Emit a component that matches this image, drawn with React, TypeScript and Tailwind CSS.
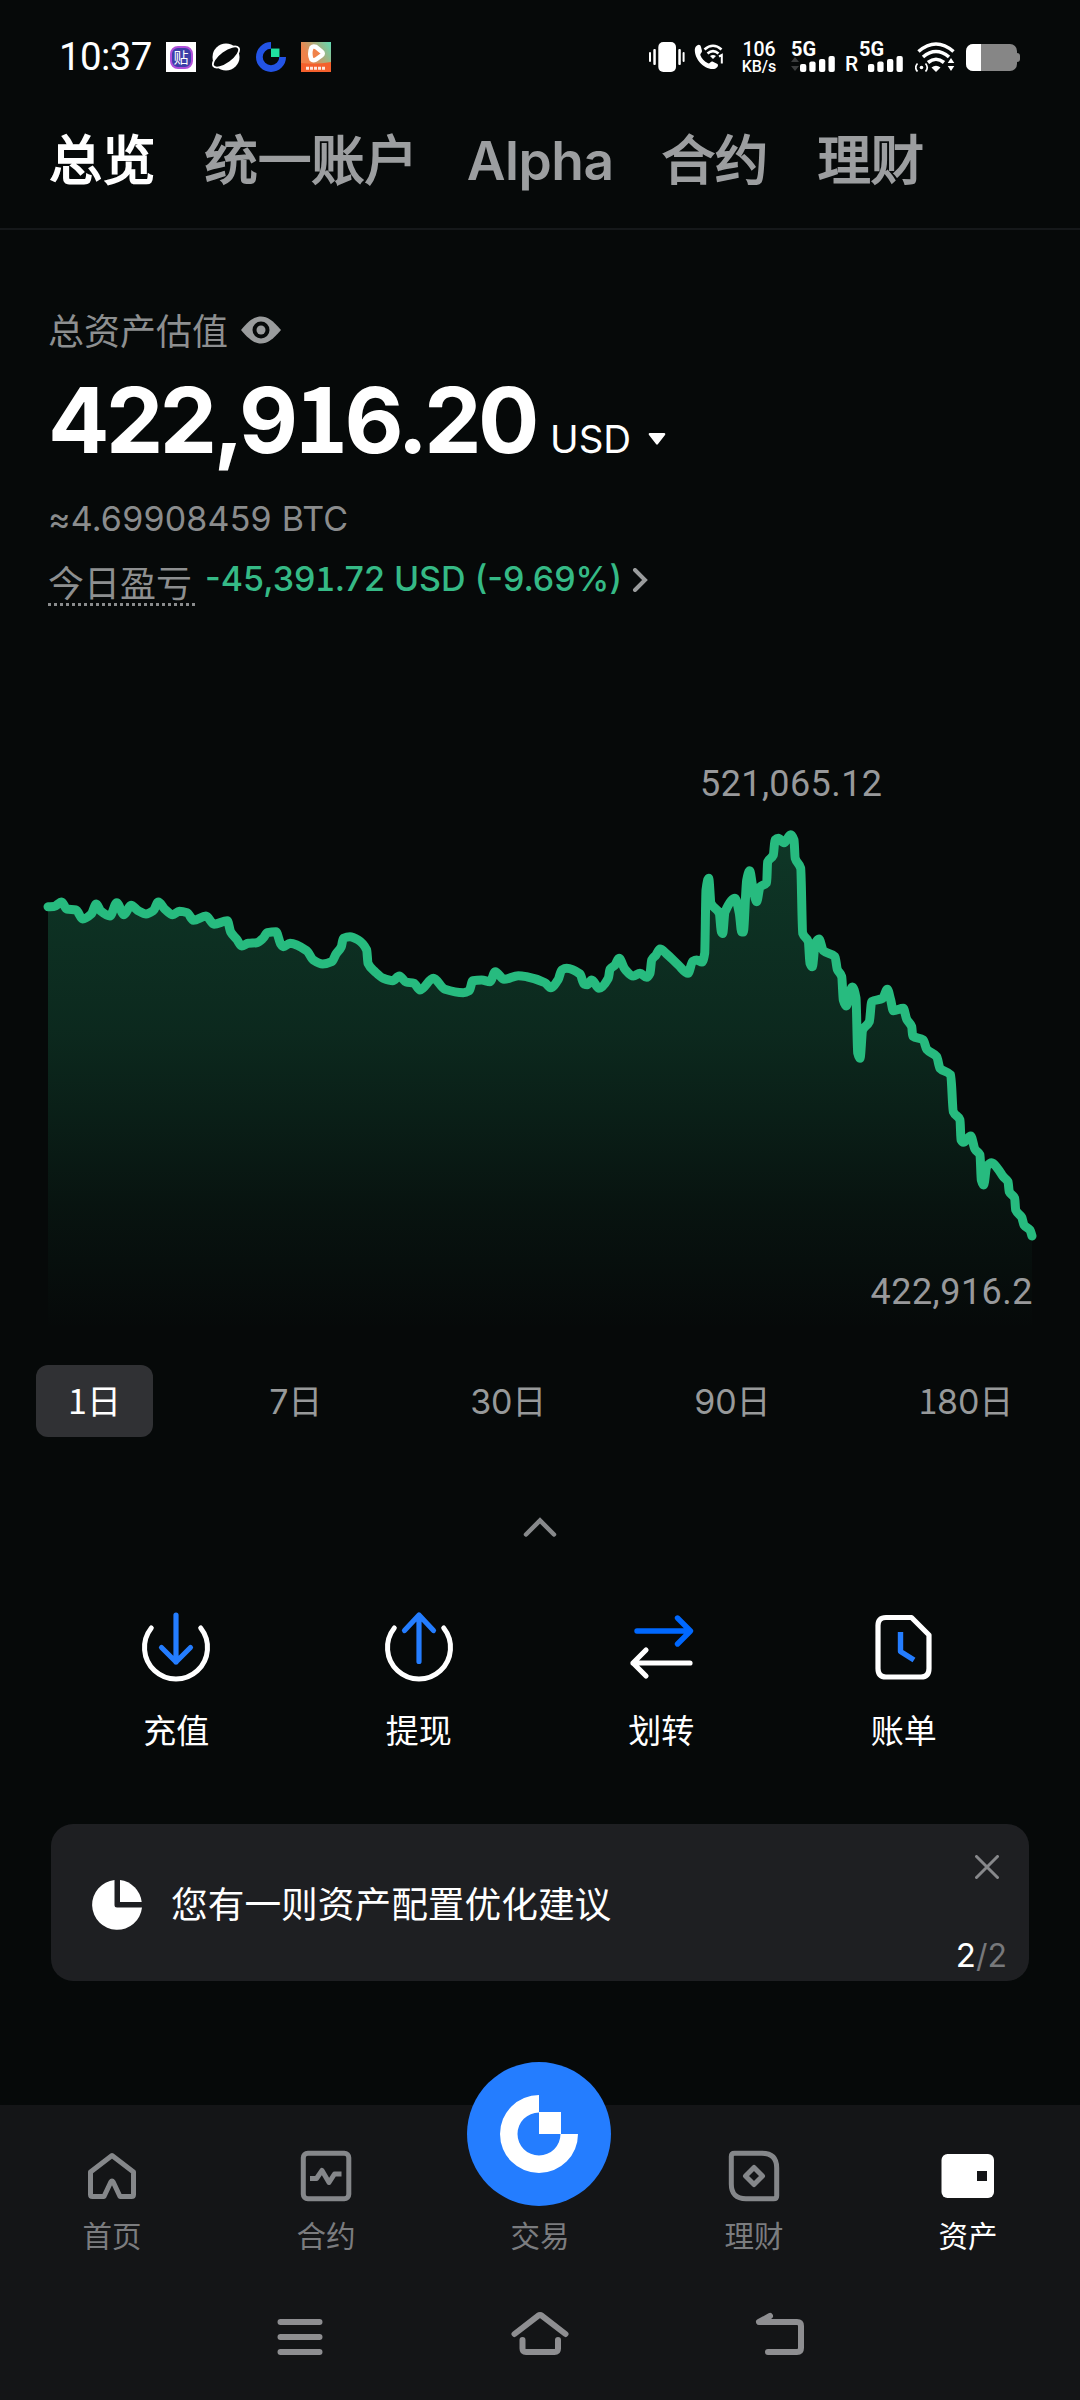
import type { ReactNode } from "react";

type Point = [number, number];

/** Asset value over one day, in chart coordinates. */
const SERIES: Point[] = [
  [48, 906.7], [54, 906.5], [61.7, 902], [66.7, 909], [76, 910], [82.7, 919], [91.3, 914], [96.3, 904], [100.7, 911],
  [110, 916], [116.7, 902.7], [124, 914.7], [131, 905.3], [138.3, 910.7], [146, 914], [153.3, 910.7], [158.3, 902],
  [165, 909.3], [172.7, 914.7], [179.3, 911.3], [187.3, 912.7], [193.3, 920.3], [206, 916], [214, 924.3], [227.3, 920.7],
  [230.7, 932], [236.7, 939.3], [241.7, 946], [248.3, 943.3], [256.7, 942.7], [263.3, 938], [267.3, 932.7], [276, 931.7],
  [280.7, 944], [283.3, 946.7], [290, 943.3], [306.7, 950.7], [313.3, 960], [322.7, 964], [331.7, 961.7], [336, 954],
  [341.3, 946.7], [343.3, 938.3], [350, 936.7], [358.3, 940], [366.7, 950], [368, 963.3], [375, 971.7], [383.3, 978.3],
  [392.7, 980.7], [399.3, 976], [406, 982], [414, 983.3], [420, 990], [433.3, 978.3], [445, 989.3], [463.3, 992.7],
  [469.3, 990.7], [472.7, 980.7], [481.7, 980], [490, 981.7], [495.3, 971.7], [504, 979.3], [518.3, 975.7], [526.7, 976.7],
  [545, 982.7], [550.7, 987.7], [558.3, 979.3], [561.7, 970], [566.7, 968.3], [580, 974], [584, 984], [587.3, 984.7],
  [591.7, 980], [599, 988.3], [608.3, 978.3], [610, 969.3], [615, 965], [619, 958.3], [625, 969.3], [633.3, 976],
  [640, 973.3], [646.7, 977.3], [650, 973.3], [651.7, 960], [656, 955], [660, 949], [666.7, 954], [678.3, 965],
  [688, 973.3], [692.7, 961.3], [696.7, 960], [702, 962], [704.7, 953.3], [706, 890], [708.7, 878.3], [711, 903.3],
  [719.3, 913.3], [721.3, 931.7], [722.7, 933.5], [725, 912], [735, 898.3], [739.3, 913.3], [741.7, 932], [743.3, 932],
  [746.7, 880], [749.7, 870.7], [752.7, 886.7], [756.7, 901.7], [760, 887], [766.7, 882.7], [767.6, 862], [773.3, 855],
  [775, 840], [778.3, 838.3], [784, 842.7], [790.7, 834.7], [794, 840], [795.2, 858.3], [800.7, 868.3], [802.7, 933.3],
  [808.3, 941.7], [810, 963.3], [812.3, 966.7], [815.3, 943.3], [819, 939], [823.3, 950.7], [835, 956.7], [837.3, 969.3],
  [841.7, 976.7], [843.3, 1000], [846.2, 1006], [852.3, 987], [856, 998], [857.7, 1053], [860, 1058.3], [862.7, 1030],
  [869.3, 1021.7], [871.7, 1001.7], [882.7, 998.3], [887.3, 989.3], [890.7, 1000], [893.3, 1010.7], [903.3, 1008.3],
  [906.7, 1019.3], [911.7, 1026.7], [912.7, 1036], [923.3, 1040], [926.7, 1049.3], [936.7, 1056.7], [940, 1068.3],
  [950.7, 1075], [953.3, 1111.7], [960, 1120], [961, 1140], [963.3, 1142.3], [970.7, 1136], [975, 1149.3], [980, 1155],
  [981.3, 1180], [983.7, 1185], [986.7, 1166.7], [991.7, 1162.7], [998.3, 1169.3], [1003.3, 1176.7], [1008, 1181.7],
  [1009.3, 1191.7], [1014.7, 1198.3], [1015.7, 1210], [1021.7, 1217.3], [1024, 1225], [1030, 1230], [1032, 1236],
];

/** Monotone cubic interpolation: smooth, and never overshoots a sample. */
function smoothPath(p: Point[]): string {
  const n = p.length;
  const s: number[] = [];
  for (let i = 0; i < n - 1; i++) s.push((p[i + 1][1] - p[i][1]) / (p[i + 1][0] - p[i][0]));
  const t: number[] = [s[0]];
  for (let i = 1; i < n - 1; i++) {
    t.push(s[i - 1] * s[i] <= 0 ? 0 : (2 * s[i - 1] * s[i]) / (s[i - 1] + s[i]));
  }
  t.push(s[n - 2]);
  let d = `M${p[0][0]} ${p[0][1]}`;
  for (let i = 0; i < n - 1; i++) {
    const h = (p[i + 1][0] - p[i][0]) / 3;
    d += `C${p[i][0] + h} ${p[i][1] + h * t[i]} ${p[i + 1][0] - h} ${p[i + 1][1] - h * t[i + 1]} ${p[i + 1][0]} ${p[i + 1][1]}`;
  }
  return d;
}

const LINE = smoothPath(SERIES);

/** Figures whose digit 1 has a foot. */
function Figures({ children }: { children: string }) {
  return (
    <>
      {children.split(/(1)/).map((part, i) =>
        part === "1" ? (
          <span key={i} className="font-['Noto_Sans_CJK_SC',sans-serif] leading-none">1</span>
        ) : (
          part
        ),
      )}
    </>
  );
}

function GateMark({ ring, square, className }: { ring: string; square: string; className: string }) {
  return (
    <svg viewBox="-39 -39 78 78" className={className}>
      <path fill={ring} d="M0-39A39 39 0 1 0 39 0H21.5A21.5 21.5 0 1 1 0-21.5Z" />
      <rect width="22" height="22" y="-22" fill={square} />
    </svg>
  );
}

function Signal({ arrows }: { arrows?: boolean }) {
  return (
    <div className="flex h-[30px] w-11 flex-col justify-between">
      <span className="h-[14px] font-['Roboto',sans-serif] text-[20px] leading-[14px] font-bold">5G</span>
      <svg viewBox="0 0 44 16" className="h-4 w-11 shrink-0" fill="#fff">
        {arrows && <path fill="#3b3d3e" d="M4 1l4 5H0zM4 15l4-5H0z" />}
        <rect x="9" y="8" width="6.3" height="8" rx="2" />
        <rect x="18.300" y="5.500" width="6.300" height="10.500" rx="2" />
        <rect x="28" y="3" width="6.300" height="13" rx="2" />
        <rect x="37.500" y="0" width="6.300" height="16" rx="2" />
      </svg>
    </div>
  );
}

function StatusBar() {
  return (
    <div className="flex h-[114px] items-center pr-[60px] pl-[59px] text-white">
      <span className="w-[107px] font-['Roboto',sans-serif] text-[38.500px] leading-none tracking-[-0.6px]">10:37</span>
      <div className="flex gap-[15px]">
        <div className="flex size-[30px] items-center justify-center bg-white">
          <div className="flex size-[23px] items-center justify-center rounded-[8px] border-2 border-[#b04fd8] bg-[#3d3fa8] text-[15px] leading-none">
            贴
          </div>
        </div>
        <svg viewBox="0 0 30 30" className="size-[30px]">
          <circle cx="15" cy="15" r="13.500" fill="#fff" />
          <ellipse cx="15" cy="15" rx="15.500" ry="6.500" fill="#060909" stroke="#fff" strokeWidth="1.800" transform="rotate(-36 15 15)" />
        </svg>
        <GateMark ring="#2354e6" square="#1fe0a0" className="size-[30px]" />
        <svg viewBox="0 0 30 30" className="size-[30px]">
          <defs>
            <linearGradient id="play" x1="0" y1="0.600" x2="1" y2="0">
              <stop offset="0.200" stopColor="#f0824a" />
              <stop offset="1" stopColor="#5fdcb4" />
            </linearGradient>
          </defs>
          <rect width="30" height="30" fill="url(#play)" />
          <path d="M0 21q15 2 30-1v10H0z" fill="#f4602c" />
          <path
            d="M10.500 5.500Q12 4 15 5l5.500 4.500q2.500 2 0 4L15 17.500q-3 1.500-4.500 0Q8 11.500 10.500 5.500z"
            fill="#f0824a"
            stroke="#fff"
            strokeWidth="4.500"
            strokeLinejoin="round"
          />
          <path d="M5 26.300h20" stroke="#fff" strokeWidth="3" strokeDasharray="3 1" opacity="0.850" />
        </svg>
      </div>
      <div className="ml-auto flex items-center">
        <svg viewBox="0 0 36 30" className="h-[30px] w-9" fill="#fff">
          <rect x="9.300" width="17.700" height="30" rx="5" />
          <rect x="0" y="10" width="2" height="10" rx="1" />
          <rect x="4.300" y="7" width="2.500" height="16" rx="1" />
          <rect x="29.300" y="7" width="2.500" height="16" rx="1" />
          <rect x="33.600" y="10" width="2" height="10" rx="1" />
        </svg>
        <svg viewBox="0 0 30 28" className="ml-[9px] h-7 w-[30px]" fill="none" stroke="#fff">
          <path
            d="M3 2.500c2-1.500 3.500-.5 4 1.500l1 4c.3 1.500-2 2.500-1.700 4 1.200 3.500 4 6.500 7.700 8.300 1.700.7 2.700-2.300 4.500-1.800l5 2.500c1.500 1.500-.5 4.500-3.500 5C10 27 .5 16 .8 6.500 1 4.500 1.800 3.300 3 2.500z"
            fill="#fff"
            stroke="none"
          />
          <path d="M10.500 6.500q8.500-7.500 17 0M13.500 10.500q5.500-4.800 11 0" strokeWidth="2.600" />
          <path d="M16 13q3-2 6 0l-3 3z" fill="#fff" stroke="none" />
          <path d="M25 13.500l2.800-1.500v8.500" strokeWidth="2" />
        </svg>
        <div className="ml-[17px] flex h-[31px] w-[36px] flex-col justify-between text-center font-['Roboto',sans-serif] font-medium">
          <div className="h-[15px] text-[19.500px] leading-[15px]">106</div>
          <div className="h-[13px] text-[16px] leading-[13px]">KB/s</div>
        </div>
        <div className="ml-[14px]"><Signal arrows /></div>
        <span className="mt-[14px] ml-[10px] w-[14px] font-['Roboto',sans-serif] text-[21px] leading-4 font-medium">R</span>
        <Signal />
        <svg viewBox="0 0 40 30" className="ml-[12px] h-[30px] w-10" fill="none" stroke="#fff">
          <path d="M3.500 9.500Q21 -5.500 38.500 9.500" strokeWidth="3.600" />
          <path d="M8 15Q21 4 34 15" strokeWidth="3.600" />
          <path d="M13 20.500Q21 14 29 20.500" strokeWidth="3.600" />
          <path d="M16.500 25.500q4.500-3.500 9 0L21 30z" fill="#fff" stroke="none" />
          <circle cx="6.500" cy="25.500" r="1.800" fill="#fff" stroke="none" />
          <path d="M2.500 21.500q-3.500 4 0 8M10.500 21.500q3.500 4 0 8" strokeWidth="1.700" />
          <path d="M36 16l3.300 5h-6.600zM36 29l3.300-5h-6.600z" fill="#fff" stroke="none" />
        </svg>
        <div className="ml-[11px] flex items-center">
          <div className="h-[27px] w-[51px] overflow-hidden rounded-[7px] bg-[#868686]">
            <div className="h-full w-[15px] bg-white" />
          </div>
          <div className="h-[9px] w-[3px] rounded-r-sm bg-[#868686]" />
        </div>
      </div>
    </div>
  );
}

function Header() {
  const tabs = ["统一账户", "Alpha", "合约", "理财"];
  return (
    <div className="flex h-[116px] gap-[49px] border-b-2 border-[#15181a] pt-[2px] pl-[49px] text-[53.300px] leading-[90px] text-[#9c9ea0]">
      <span className="text-white [-webkit-text-stroke:1.8px_#fff]">总览</span>
      {tabs.map((t) => (
        <span
          key={t}
          className={
            t === "Alpha"
              ? "w-[146px] font-semibold tracking-[-0.5px] whitespace-nowrap"
              : "whitespace-nowrap [-webkit-text-stroke:1.8px_#9c9ea0]"
          }
        >
          {t}
        </span>
      ))}
    </div>
  );
}

function Summary() {
  return (
    <div className="flex flex-col px-12 pt-20">
      <div className="flex h-[42px] items-center text-[36px] leading-[42px] text-[#8d8f90]">
        <span className="pt-px">总资产估值</span>
        <svg viewBox="0 0 40 28" className="mb-[3px] ml-[13px] h-7 w-10">
          <path d="M0 14C8 4.500 13.500.5 20 .5S32 4.500 40 14C32 23.500 26.500 27.500 20 27.500S8 23.500 0 14z" fill="#9a9c9d" />
          <circle cx="20" cy="14" r="8.500" fill="#060909" />
          <circle cx="20" cy="14" r="4.500" fill="#9a9c9d" />
        </svg>
      </div>
      <div className="mt-[16px] flex h-24 items-baseline whitespace-nowrap text-white">
        <span className="w-[502px] text-[91px] leading-[96px] font-bold tracking-[-3.600px]"><Figures>422,916.20</Figures></span>
        <span className="text-[38.500px]">USD</span>
        <svg viewBox="0 0 18 12" className="ml-[17px] h-3 w-[18px] -translate-y-2" fill="#fff">
          <path d="M2 0h14q2 0 1 2l-7 9q-1 1.500-2 0L1 2q-1-2 1-2z" />
        </svg>
      </div>
      <div className="mt-[33px] h-11 text-[34px] leading-[44px] tracking-[0.2px] text-[#8a8c8d]">≈4.69908459 BTC</div>
      <div className="mt-[14px] flex h-[51px]">
        <span className="h-[51px] w-[147px] border-b-3 border-dotted border-[#8a8c8d] pt-[5px] text-[36px] leading-[48px] text-[#8d8f90]">
          今日盈亏
        </span>
        <span className="ml-[10px] text-[34px] leading-[47px] font-medium whitespace-nowrap text-[#35ba86]">
          <Figures>-45,391.72 USD (-9.69%)</Figures>
        </span>
        <svg viewBox="0 0 16 24" className="mt-[13px] ml-[10px] h-6 w-4" fill="none" stroke="#9a9c9d" strokeWidth="4" strokeLinecap="round">
          <path d="M3 2l10 10L3 22" />
        </svg>
      </div>
    </div>
  );
}

function Chart() {
  return (
    <svg viewBox="0 606 1080 740" className="h-[740px] w-full">
      <defs>
        <linearGradient id="area" gradientUnits="userSpaceOnUse" x1="0" y1="835" x2="0" y2="1330">
          <stop offset="0" stopColor="#26b97c" stopOpacity="0.260" />
          <stop offset="0.400" stopColor="#26b97c" stopOpacity="0.180" />
          <stop offset="0.550" stopColor="#26b97c" stopOpacity="0.130" />
          <stop offset="0.750" stopColor="#26b97c" stopOpacity="0.060" />
          <stop offset="1" stopColor="#26b97c" stopOpacity="0" />
        </linearGradient>
      </defs>
      <path d={`${LINE}V1330H48Z`} fill="url(#area)" />
      <path d={LINE} fill="none" stroke="#27bb7f" strokeWidth="9" strokeLinecap="round" strokeLinejoin="round" />
      <g fill="#98999b" className="font-['Roboto',sans-serif] text-[36px]">
        <text x="700" y="796" textLength="182">521,065.12</text>
        <text x="870.500" y="1304" textLength="162">422,916.2</text>
      </g>
    </svg>
  );
}

function Ranges() {
  const ranges = ["7日", "30日", "90日", "180日"];
  return (
    <div className="mt-[19px] flex h-[72px] justify-between pr-[35px] pl-9 text-[34px] leading-[73px] text-[#97999a]">
      <span className="w-[117px] rounded-[12px] bg-[#303134] text-center text-white"><Figures>1日</Figures></span>
      {ranges.map((r) => (
        <span key={r} className="pr-[32px] pl-[34px] tracking-[-0.2px]"><Figures>{r}</Figures></span>
      ))}
    </div>
  );
}

const Vessel = () => <path d="M15.300 22A31.500 31.500 0 1 0 64.700 22" stroke="#fff" />;

const actions: { label: string; art: ReactNode }[] = [
  {
    label: "充值",
    art: (
      <>
        <Vessel />
        <path d="M40 9V56M25.500 41.500L40 56 54.500 41.500" stroke="#247dff" strokeWidth="5.200" />
      </>
    ),
  },
  {
    label: "提现",
    art: (
      <>
        <Vessel />
        <path d="M40 55.500V9M25.500 24.500L40 9 54.500 24.500" stroke="#247dff" strokeWidth="5.200" />
      </>
    ),
  },
  {
    label: "划转",
    art: (
      <>
        <path d="M16 25H69M56.500 12L69.500 25 56.500 38" stroke="#0068ff" strokeWidth="5.400" />
        <path d="M69 57H12M25 44L12 57 25 70" stroke="#fff" strokeWidth="5.200" />
      </>
    ),
  },
  {
    label: "账单",
    art: (
      <>
        <path d="M22 11.500H47.500L65 29V62.500Q65 71 57 71H22Q14 71 14 62.500V19.500Q14 11.500 22 11.500Z" stroke="#fff" strokeWidth="5.200" />
        <path d="M36.500 26V45.500L50 54" stroke="#247dff" strokeWidth="5.400" strokeLinecap="butt" />
      </>
    ),
  },
];

function Actions() {
  return (
    <div className="mt-[69px] grid grid-cols-4 px-[55px]">
      {actions.map(({ label, art }) => (
        <div key={label} className="flex flex-col items-center">
          <svg viewBox="0 0 80 80" className="size-20" fill="none" strokeWidth="5" strokeLinecap="round" strokeLinejoin="round">
            {art}
          </svg>
          <span className="mt-[23px] text-[33px] leading-[44px] text-white">{label}</span>
        </div>
      ))}
    </div>
  );
}

function Notice() {
  return (
    <div className="mx-[51px] mt-[71px] flex h-[157px] items-center rounded-[22px] bg-[#1e1f22] pr-[22px] pl-[41px]">
      <svg viewBox="0 0 50 50" className="mt-1 size-[50px]" fill="#fff">
        <path d="M22.500 0A25 25 0 1 0 50 27.500H25Q22.500 27.500 22.500 25Z" />
        <path d="M28 0A25 25 0 0 1 49.700 22H28Z" />
      </svg>
      <span className="mt-1 ml-[29px] text-[36.700px] leading-[44px] whitespace-nowrap text-white">您有一则资产配置优化建议</span>
      <div className="ml-auto flex h-full flex-col items-end justify-between pt-[31px]">
        <svg viewBox="0 0 24 24" className="mr-[8px] size-6" fill="none" stroke="#87888b" strokeWidth="3" strokeLinecap="round">
          <path d="M1.500 1.500l21 21M22.500 1.500l-21 21" />
        </svg>
        <span className="mb-[5px] text-[32px] leading-[40px] text-[#77787b]">
          <span className="text-[33px] text-white">2</span>/2
        </span>
      </div>
    </div>
  );
}

const navItems: { label: string; art?: ReactNode; active?: boolean }[] = [
  {
    label: "首页",
    art: <path d="M30 9.500L51.500 26V48.500Q51.500 50.500 49.500 50.500H38L31.200 36Q30 34 28.800 36L22 50.500H10.500Q8.500 50.500 8.500 48.500V26Z" />,
  },
  {
    label: "合约",
    art: (
      <>
        <rect x="7.300" y="7.300" width="45.500" height="45.500" rx="4.500" />
        <path d="M14 32.500H20.500L26 24.500 33 36.500 38.500 28H45.500" strokeLinecap="butt" />
      </>
    ),
  },
  { label: "交易" },
  {
    label: "理财",
    art: (
      <>
        <path d="M10.500 7.300H38Q52.700 7.300 52.700 22V49.700Q52.700 52.700 49.700 52.700H22Q7.300 52.700 7.300 38V10.500Q7.300 7.300 10.500 7.300Z" />
        <path d="M30 21.500L38.500 30 30 38.500 21.500 30Z" />
      </>
    ),
  },
  {
    label: "资产",
    active: true,
    art: (
      <>
        <rect x="3.500" y="8" width="52.500" height="44" rx="6" fill="#fff" stroke="none" />
        <rect x="39" y="25" width="10" height="10" fill="#141517" stroke="none" />
      </>
    ),
  },
];

function BottomBar() {
  return (
    <div className="mt-[124px] h-[295px] bg-[#141517]">
      <div className="relative grid grid-cols-5 px-[5px] pt-[41px]">
        {navItems.map(({ label, art, active }) => (
          <div key={label} className={active ? "flex flex-col items-center text-white" : "flex flex-col items-center text-[#7b7c7f]"}>
            <svg viewBox="0 0 60 60" className="size-[60px]" fill="none" stroke="#85878a" strokeWidth="5" strokeLinejoin="round">
              {art}
            </svg>
            <span className="mt-[10px] text-[29.500px] leading-10">{label}</span>
          </div>
        ))}
        <div className="absolute -top-[43px] left-[467px] flex size-36 items-center justify-center rounded-full bg-[#247dff]">
          <GateMark ring="#fff" square="#fff" className="size-[78px]" />
        </div>
      </div>
      <div className="mx-auto mt-12 grid w-[720px] grid-cols-3 justify-items-center">
        <svg viewBox="0 0 60 60" className="size-[60px]" fill="none" stroke="#8e8e91" strokeWidth="6" strokeLinecap="round">
          <path d="M10.500 18H49.500M10.500 33H49.500M10.500 48H49.500" />
        </svg>
        <svg viewBox="0 0 60 60" className="size-[60px]" fill="none" stroke="#8e8e91" strokeWidth="6" strokeLinecap="round" strokeLinejoin="round">
          <path d="M4.500 30L28 11.800Q30 10.500 32 11.800L55.500 30M12.500 36V44.500Q12.500 48 16 48H44.500Q48 48 48 44.500V36" />
        </svg>
        <svg viewBox="0 0 60 60" className="size-[60px]" fill="none" stroke="#8e8e91" strokeWidth="6" strokeLinecap="round" strokeLinejoin="round">
          <path d="M20 12L9 18H47Q51 18 51 22V44Q51 48 47 48H18" />
        </svg>
      </div>
    </div>
  );
}

export default function App() {
  return (
    <div className="h-[2400px] w-[1080px] overflow-hidden bg-[#060909] font-['Inter','Noto_Sans_CJK_SC',sans-serif]">
      <StatusBar />
      <Header />
      <Summary />
      <Chart />
      <Ranges />
      <svg viewBox="0 0 34 20" className="mx-auto mt-20 h-5 w-[34px]" fill="none" stroke="#87898b" strokeWidth="4.500" strokeLinecap="round">
        <path d="M3 17.500L17 3.500 31 17.500" />
      </svg>
      <Actions />
      <Notice />
      <BottomBar />
    </div>
  );
}
